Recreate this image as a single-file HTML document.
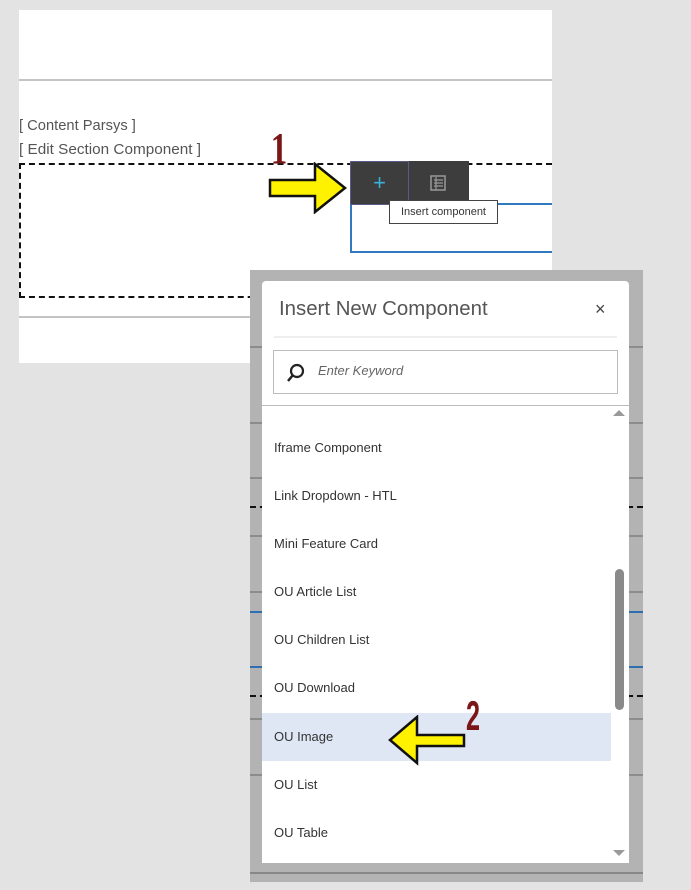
<!DOCTYPE html>
<html><head><style>
*{margin:0;padding:0;box-sizing:border-box}
body{width:691px;height:890px;background:#e3e3e3;position:relative;overflow:hidden;font-family:"Liberation Sans",sans-serif}
.a{position:absolute}
.lbl{color:#555;font-size:15px;font-family:"Liberation Sans",sans-serif;transform-origin:left top}
.item{position:absolute;left:12px;font-size:13px;color:#333}
.ln{position:absolute;height:2px;background:#8c8c8c}
</style></head><body>
<div class="a" style="left:19px;top:10px;width:533px;height:353px;background:#fff"></div>
<div class="a" style="left:19px;top:79px;width:533px;height:2px;background:#c4c4c4"></div>
<div class="a" style="left:19px;top:316px;width:533px;height:2px;background:#c4c4c4"></div>
<div class="a lbl" style="left:19px;top:117px;transform:scaleX(.98)">[ Content Parsys ]</div>
<div class="a lbl" style="left:19px;top:141px;transform:scaleX(1.02)">[ Edit Section Component ]</div>
<div class="a" style="left:19px;top:163px;width:533px;height:135px;border:2px dashed #111;border-right:none"></div>
<div class="a" style="left:350px;top:203px;width:202px;height:50px;border:2px solid #2f7ac0;border-right:none"></div>
<div class="a" style="left:350px;top:161px;width:119px;height:44px;background:#3d3d3d"></div>
<div class="a" style="left:350px;top:161px;width:59px;height:44px;border:1px solid #5b5b8a;color:#3ab0d8;font-size:22px;text-align:center;line-height:42px">+</div>
<svg class="a" style="left:430px;top:175px" width="16" height="16"><rect x="1" y="1" width="14" height="14" fill="none" stroke="#999" stroke-width="1.5"/><path d="M4 5H13M4 8H13M4 11H13M6 2V15" stroke="#999" stroke-width="1.2"/></svg>
<div class="a" style="left:389px;top:200px;width:109px;height:24px;background:#fff;border:1px solid #444;font-size:11px;color:#333;line-height:22px;text-align:center">Insert component</div>
<div class="a" style="left:268px;top:127px;font-size:44px;font-weight:bold;color:#7a1616;font-family:'Liberation Serif',serif;line-height:44px;transform:scaleX(.75)">1</div>
<svg class="a" style="left:268px;top:162px" width="80" height="52"><path d="M2 18H47V2L77 26L47 50V34H2Z" fill="#fff200" stroke="#111" stroke-width="2.5"/></svg>

<div class="a" style="left:250px;top:270px;width:393px;height:612px;background:#b3b3b3"></div>
<div class="ln" style="left:250px;top:422px;width:393px"></div>
<div class="ln" style="left:250px;top:477px;width:393px"></div>
<div class="ln" style="left:250px;top:535px;width:393px"></div>
<div class="ln" style="left:250px;top:591px;width:393px"></div>
<div class="ln" style="left:250px;top:611px;width:393px;background:#2f6eb0"></div>
<div class="ln" style="left:250px;top:666px;width:393px;background:#2f6eb0"></div>
<div class="ln" style="left:250px;top:718px;width:393px"></div>
<div class="ln" style="left:250px;top:774px;width:393px"></div>
<div class="ln" style="left:250px;top:346px;width:393px"></div>
<div class="a" style="left:250px;top:506px;width:393px;border-top:2px dashed #111"></div>
<div class="a" style="left:250px;top:695px;width:393px;border-top:2px dashed #111"></div>
<div class="ln" style="left:250px;top:872px;width:393px;background:#888"></div>

<div class="a" style="left:262px;top:281px;width:367px;height:582px;background:#fff;border-radius:4px 4px 0 0;overflow:hidden">
 <div class="a" style="left:17px;top:17px;font-size:20px;color:#555;transform:scaleX(1.02);transform-origin:left">Insert New Component</div>
 <div class="a" style="left:333px;top:18px;font-size:18px;color:#444">×</div>
 <div class="a" style="left:12px;top:55px;width:343px;height:2px;background:#eee"></div>
 <div class="a" style="left:11px;top:69px;width:345px;height:44px;border:1px solid #bbb"></div>
 <svg class="a" style="left:24px;top:82px" width="20" height="20"><circle cx="11" cy="8" r="6" fill="none" stroke="#222" stroke-width="2.2"/><path d="M7 12L2 18" stroke="#222" stroke-width="2.5"/></svg>
 <div class="a" style="left:56px;top:82px;font-size:13px;color:#666;font-style:italic">Enter Keyword</div>
 <div class="a" style="left:0;top:124px;width:367px;height:1px;background:#bbb"></div>
 <div class="a" style="left:0;top:432px;width:349px;height:48px;background:#dfe7f5"></div>
 <div class="item" style="top:159px">Iframe Component</div>
 <div class="item" style="top:207px">Link Dropdown - HTL</div>
 <div class="item" style="top:255px">Mini Feature Card</div>
 <div class="item" style="top:303px">OU Article List</div>
 <div class="item" style="top:351px">OU Children List</div>
 <div class="item" style="top:399px">OU Download</div>
 <div class="item" style="top:448px">OU Image</div>
 <div class="item" style="top:496px">OU List</div>
 <div class="item" style="top:544px">OU Table</div>
 <div class="a" style="left:353px;top:288px;width:9px;height:141px;background:#8a8a8a;border-radius:5px"></div>
 <div class="a" style="left:351px;top:129px;width:0;height:0;border:6px solid transparent;border-bottom:6px solid #999;border-top:none"></div>
 <div class="a" style="left:351px;top:569px;width:0;height:0;border:6px solid transparent;border-top:6px solid #999;border-bottom:none"></div>
</div>
<svg class="a" style="left:388px;top:715px" width="78" height="52"><path d="M76 20H29V2L2 25L29 48V31H76Z" fill="#fff200" stroke="#111" stroke-width="2.5"/></svg>
<div class="a" style="left:466px;top:694px;font-size:42px;font-weight:bold;color:#7a1616;line-height:44px;transform:scaleX(.6);transform-origin:left">2</div>
</body></html>
